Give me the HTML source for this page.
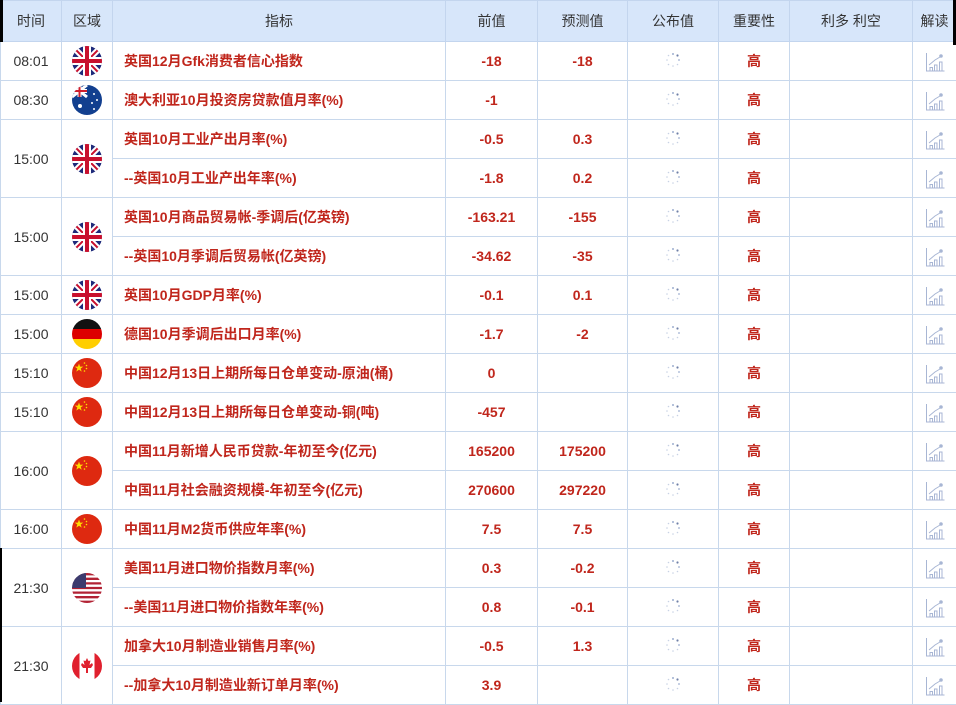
<!DOCTYPE html>
<html><head><meta charset="utf-8"><style>
*{margin:0;padding:0;box-sizing:border-box}
body{width:956px;height:702px;overflow:hidden;background:#fff;font-family:"Liberation Sans","Noto Sans CJK SC",sans-serif;position:relative}
table{border-collapse:collapse;table-layout:fixed;width:956px;position:absolute;left:0;top:0}
td,th{border:1px solid #c8d8ec;text-align:center;font-size:14px;height:39px;padding:0;vertical-align:middle}
th{background:#d7e6fa;font-weight:normal;color:#333;height:41px;border-color:#c3d5ee}
.t{color:#333}
.n{color:#c0261c;font-weight:bold;text-align:left;padding-left:11px}
.v{color:#c0261c;font-weight:bold}
.f{line-height:0}
.bl{position:absolute;background:#000}
td svg.c{position:relative;top:2px}
</style></head><body>
<svg width="0" height="0" style="position:absolute">
<defs>
<clipPath id="c"><circle cx="15" cy="15" r="15"/></clipPath>
<symbol id="uk" viewBox="0 0 30 30"><g clip-path="url(#c)"><rect width="30" height="30" fill="#1e2a7a"/><path d="M0 0L30 30M30 0L0 30" stroke="#fff" stroke-width="6"/><path d="M0 0L30 30M30 0L0 30" stroke="#c8102e" stroke-width="2"/><path d="M15 0V30M0 15H30" stroke="#fff" stroke-width="8"/><path d="M15 0V30M0 15H30" stroke="#c8102e" stroke-width="4"/></g></symbol>
<symbol id="au" viewBox="0 0 30 30"><g clip-path="url(#c)"><rect width="30" height="30" fill="#123f8f"/><path d="M0 0L15 12M15 0L0 12" stroke="#fff" stroke-width="3"/><path d="M7.5 0V12M0 6H15" stroke="#fff" stroke-width="4"/><path d="M7.5 0V12M0 6H15" stroke="#d0202e" stroke-width="2"/><circle cx="8" cy="21" r="2" fill="#fff"/><circle cx="22" cy="9" r="1" fill="#fff"/><circle cx="25" cy="15" r="1" fill="#fff"/><circle cx="20" cy="18" r="1" fill="#fff"/><circle cx="22" cy="24" r="1" fill="#fff"/></g></symbol>
<symbol id="de" viewBox="0 0 30 30"><g clip-path="url(#c)"><rect width="30" height="10" fill="#111"/><rect y="10" width="30" height="10" fill="#dd0000"/><rect y="20" width="30" height="10" fill="#ffce00"/></g></symbol>
<symbol id="cn" viewBox="0 0 30 30"><g clip-path="url(#c)"><rect width="30" height="30" fill="#de2910"/><polygon points="7,5.5 8.1,8.6 11.3,8.6 8.7,10.5 9.7,13.6 7,11.7 4.3,13.6 5.3,10.5 2.7,8.6 5.9,8.6" fill="#ffde00"/><circle cx="12.5" cy="5" r="0.8" fill="#ffde00"/><circle cx="14.5" cy="7.5" r="0.8" fill="#ffde00"/><circle cx="14.5" cy="10.5" r="0.8" fill="#ffde00"/><circle cx="12.5" cy="13" r="0.8" fill="#ffde00"/></g></symbol>
<symbol id="us" viewBox="0 0 30 30"><g clip-path="url(#c)"><rect width="30" height="30" fill="#fff"/><path d="M0 1.2H30M0 5.8H30M0 10.4H30M0 15H30M0 19.6H30M0 24.2H30M0 28.8H30" stroke="#b22234" stroke-width="2.3"/><rect width="14" height="15" fill="#3c3b6e"/></g></symbol>
<symbol id="ca" viewBox="0 0 30 30"><g clip-path="url(#c)"><rect width="30" height="30" fill="#fff"/><rect width="7.5" height="30" fill="#e0202e"/><rect x="22.5" width="7.5" height="30" fill="#e0202e"/><path d="M15 7L16.5 10L18.5 9.5L17.5 14L20 12L21 14L19 17H16V22H14V17H11L9 14L10 12L12.5 14L11.5 9.5L13.5 10Z" fill="#e0202e"/></g></symbol>
<symbol id="sp" viewBox="0 0 16 16"><g fill="#9eaed0"><circle cx="8" cy="2" r="1"/><circle cx="12.5" cy="3.5" r="1.1" fill="#7080a8"/><circle cx="14" cy="8" r="0.9"/><circle cx="12.5" cy="12.5" r="0.8" fill="#c8d2e4"/><circle cx="8" cy="14" r="0.8" fill="#c8d2e4"/><circle cx="3.5" cy="12.5" r="0.8" fill="#c8d2e4"/><circle cx="2" cy="8" r="0.8" fill="#c8d2e4"/><circle cx="3.5" cy="3.5" r="0.8" fill="#c8d2e4"/></g></symbol>
<symbol id="ch" viewBox="0 0 20 20"><g fill="none" stroke="#a8b6d4" stroke-width="1"><path d="M1.5 1V19H19.5"/><path d="M4 13L10 8L15 5"/><path d="M5 18.5V15.5H7.5V18.5M9.5 18.5V13H12V18.5M14.5 18.5V10H17V18.5"/><circle cx="16" cy="4" r="1.3" fill="#a8b6d4"/></g></symbol>
</defs></svg>
<table>
<colgroup><col style="width:61px"><col style="width:51px"><col style="width:333px"><col style="width:92px"><col style="width:90px"><col style="width:91px"><col style="width:71px"><col style="width:123px"><col style="width:44px"></colgroup>
<tr><th>时间</th><th>区域</th><th>指标</th><th>前值</th><th>预测值</th><th>公布值</th><th>重要性</th><th>利多 利空</th><th>解读</th></tr>
<tr><td class="t">08:01</td><td class="f"><svg width="30" height="30"><use href="#uk"/></svg></td><td class="n">英国12月Gfk消费者信心指数</td><td class="v">-18</td><td class="v">-18</td><td><svg width="16" height="16"><use href="#sp"/></svg></td><td class="v">高</td><td></td><td><svg class="c" width="20" height="20"><use href="#ch"/></svg></td></tr>
<tr><td class="t">08:30</td><td class="f"><svg width="30" height="30"><use href="#au"/></svg></td><td class="n">澳大利亚10月投资房贷款值月率(%)</td><td class="v">-1</td><td class="v"></td><td><svg width="16" height="16"><use href="#sp"/></svg></td><td class="v">高</td><td></td><td><svg class="c" width="20" height="20"><use href="#ch"/></svg></td></tr>
<tr><td class="t" rowspan="2">15:00</td><td class="f" rowspan="2"><svg width="30" height="30"><use href="#uk"/></svg></td><td class="n">英国10月工业产出月率(%)</td><td class="v">-0.5</td><td class="v">0.3</td><td><svg width="16" height="16"><use href="#sp"/></svg></td><td class="v">高</td><td></td><td><svg class="c" width="20" height="20"><use href="#ch"/></svg></td></tr>
<tr><td class="n">--英国10月工业产出年率(%)</td><td class="v">-1.8</td><td class="v">0.2</td><td><svg width="16" height="16"><use href="#sp"/></svg></td><td class="v">高</td><td></td><td><svg class="c" width="20" height="20"><use href="#ch"/></svg></td></tr>
<tr><td class="t" rowspan="2">15:00</td><td class="f" rowspan="2"><svg width="30" height="30"><use href="#uk"/></svg></td><td class="n">英国10月商品贸易帐-季调后(亿英镑)</td><td class="v">-163.21</td><td class="v">-155</td><td><svg width="16" height="16"><use href="#sp"/></svg></td><td class="v">高</td><td></td><td><svg class="c" width="20" height="20"><use href="#ch"/></svg></td></tr>
<tr><td class="n">--英国10月季调后贸易帐(亿英镑)</td><td class="v">-34.62</td><td class="v">-35</td><td><svg width="16" height="16"><use href="#sp"/></svg></td><td class="v">高</td><td></td><td><svg class="c" width="20" height="20"><use href="#ch"/></svg></td></tr>
<tr><td class="t">15:00</td><td class="f"><svg width="30" height="30"><use href="#uk"/></svg></td><td class="n">英国10月GDP月率(%)</td><td class="v">-0.1</td><td class="v">0.1</td><td><svg width="16" height="16"><use href="#sp"/></svg></td><td class="v">高</td><td></td><td><svg class="c" width="20" height="20"><use href="#ch"/></svg></td></tr>
<tr><td class="t">15:00</td><td class="f"><svg width="30" height="30"><use href="#de"/></svg></td><td class="n">德国10月季调后出口月率(%)</td><td class="v">-1.7</td><td class="v">-2</td><td><svg width="16" height="16"><use href="#sp"/></svg></td><td class="v">高</td><td></td><td><svg class="c" width="20" height="20"><use href="#ch"/></svg></td></tr>
<tr><td class="t">15:10</td><td class="f"><svg width="30" height="30"><use href="#cn"/></svg></td><td class="n">中国12月13日上期所每日仓单变动-原油(桶)</td><td class="v">0</td><td class="v"></td><td><svg width="16" height="16"><use href="#sp"/></svg></td><td class="v">高</td><td></td><td><svg class="c" width="20" height="20"><use href="#ch"/></svg></td></tr>
<tr><td class="t">15:10</td><td class="f"><svg width="30" height="30"><use href="#cn"/></svg></td><td class="n">中国12月13日上期所每日仓单变动-铜(吨)</td><td class="v">-457</td><td class="v"></td><td><svg width="16" height="16"><use href="#sp"/></svg></td><td class="v">高</td><td></td><td><svg class="c" width="20" height="20"><use href="#ch"/></svg></td></tr>
<tr><td class="t" rowspan="2">16:00</td><td class="f" rowspan="2"><svg width="30" height="30"><use href="#cn"/></svg></td><td class="n">中国11月新增人民币贷款-年初至今(亿元)</td><td class="v">165200</td><td class="v">175200</td><td><svg width="16" height="16"><use href="#sp"/></svg></td><td class="v">高</td><td></td><td><svg class="c" width="20" height="20"><use href="#ch"/></svg></td></tr>
<tr><td class="n">中国11月社会融资规模-年初至今(亿元)</td><td class="v">270600</td><td class="v">297220</td><td><svg width="16" height="16"><use href="#sp"/></svg></td><td class="v">高</td><td></td><td><svg class="c" width="20" height="20"><use href="#ch"/></svg></td></tr>
<tr><td class="t">16:00</td><td class="f"><svg width="30" height="30"><use href="#cn"/></svg></td><td class="n">中国11月M2货币供应年率(%)</td><td class="v">7.5</td><td class="v">7.5</td><td><svg width="16" height="16"><use href="#sp"/></svg></td><td class="v">高</td><td></td><td><svg class="c" width="20" height="20"><use href="#ch"/></svg></td></tr>
<tr><td class="t" rowspan="2">21:30</td><td class="f" rowspan="2"><svg width="30" height="30"><use href="#us"/></svg></td><td class="n">美国11月进口物价指数月率(%)</td><td class="v">0.3</td><td class="v">-0.2</td><td><svg width="16" height="16"><use href="#sp"/></svg></td><td class="v">高</td><td></td><td><svg class="c" width="20" height="20"><use href="#ch"/></svg></td></tr>
<tr><td class="n">--美国11月进口物价指数年率(%)</td><td class="v">0.8</td><td class="v">-0.1</td><td><svg width="16" height="16"><use href="#sp"/></svg></td><td class="v">高</td><td></td><td><svg class="c" width="20" height="20"><use href="#ch"/></svg></td></tr>
<tr><td class="t" rowspan="2">21:30</td><td class="f" rowspan="2"><svg width="30" height="30"><use href="#ca"/></svg></td><td class="n">加拿大10月制造业销售月率(%)</td><td class="v">-0.5</td><td class="v">1.3</td><td><svg width="16" height="16"><use href="#sp"/></svg></td><td class="v">高</td><td></td><td><svg class="c" width="20" height="20"><use href="#ch"/></svg></td></tr>
<tr><td class="n">--加拿大10月制造业新订单月率(%)</td><td class="v">3.9</td><td class="v"></td><td><svg width="16" height="16"><use href="#sp"/></svg></td><td class="v">高</td><td></td><td><svg class="c" width="20" height="20"><use href="#ch"/></svg></td></tr>
</table>
<div class="bl" style="left:0;top:0;width:3px;height:42px"></div>
<div class="bl" style="left:0;top:548px;width:2px;height:154px"></div>
<div class="bl" style="left:953px;top:0;width:3px;height:45px"></div>
</body></html>
